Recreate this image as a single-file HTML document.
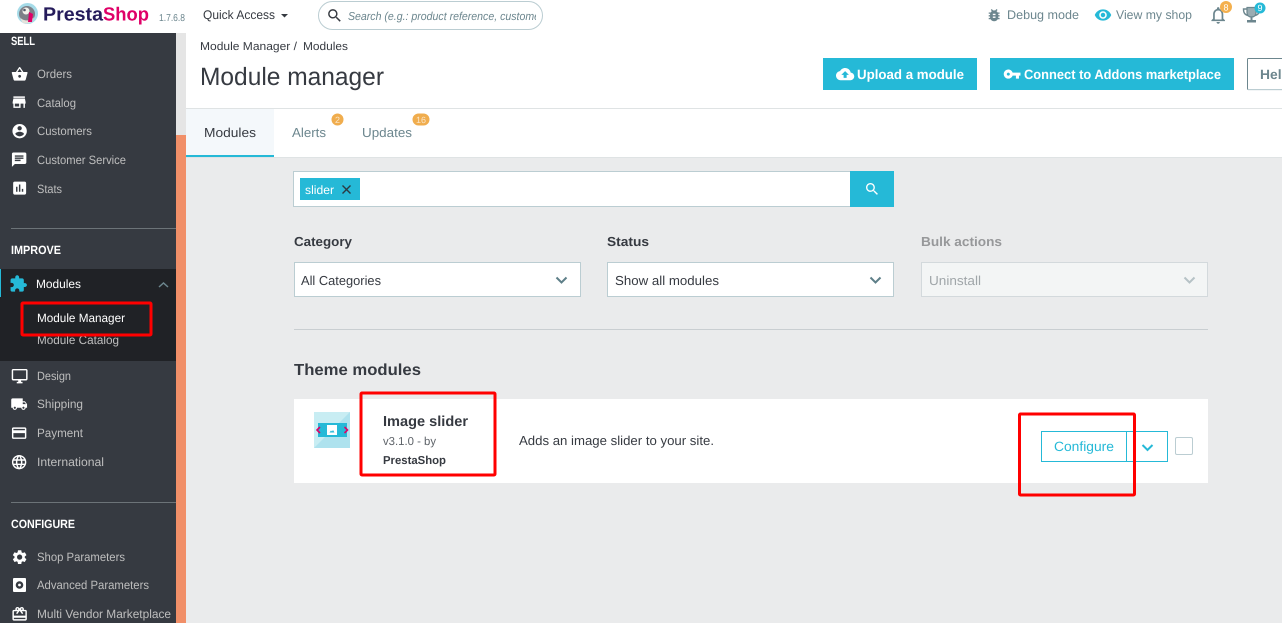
<!DOCTYPE html>
<html lang="en"><head><meta charset="utf-8"><title>Module manager</title>
<style>
html,body{margin:0;padding:0;background:#eaebec;overflow:hidden}
svg{display:block}
text{font-family:"Liberation Sans",Arial,sans-serif;text-rendering:geometricPrecision}
.s{font-size:12px;fill:#bebebe}
.g{font-size:12px;font-weight:bold;fill:#fff}
.i{fill:#fff}
</style></head><body>
<svg width="1282" height="623" viewBox="0 0 1282 623" xmlns="http://www.w3.org/2000/svg">
<rect width="1282" height="623" fill="#eaebec"/>
<!-- top bar -->
<rect width="1282" height="33" fill="#fff"/>
<circle cx="27.500" cy="13.500" r="10.500" fill="#a5dbe8"/>
<circle cx="27" cy="14" r="8" fill="#7d8088"/>
<path d="M20 17c2 4 10 5 14 0l-2 5c-4 2-8 2-10 0z" fill="#e6e3dc"/>
<circle cx="26" cy="11" r="3.500" fill="#f2f0ea"/>
<circle cx="24.500" cy="10" r="1.300" fill="#54596a"/>
<path d="M29 12l4 2-1 8h-4z" fill="#df0067"/>
<text x="43" y="20.500" font-size="19" font-weight="bold" fill="#251b5b" textLength="60" lengthAdjust="spacingAndGlyphs">Presta</text>
<text x="103" y="20.500" font-size="19" font-weight="bold" fill="#df0067" textLength="46" lengthAdjust="spacingAndGlyphs">Shop</text>
<text x="159" y="21" font-size="10" fill="#6c868e" textLength="26" lengthAdjust="spacingAndGlyphs">1.7.6.8</text>
<text x="203" y="19" font-size="12.500" fill="#363a41" textLength="72" lengthAdjust="spacingAndGlyphs">Quick Access</text>
<path d="M281 14h7l-3.500 3.500z" fill="#363a41"/>
<rect x="318.500" y="1.500" width="224" height="28" rx="14" fill="#fff" stroke="#bbcdd2"/>
<path transform="translate(326,7) scale(.72)" d="M15.500 14h-.79l-.28-.27C15.410 12.590 16 11.110 16 9.500 16 5.910 13.090 3 9.500 3S3 5.910 3 9.500 5.910 16 9.500 16c1.610 0 3.090-.59 4.230-1.570l.27.280v.79l5 4.990L20.490 19l-4.990-5zm-6 0C7.010 14 5 11.990 5 9.500S7.010 5 9.500 5 14 7.010 14 9.500 11.990 14 9.500 14z" fill="#363a41"/>
<svg x="348" y="5" width="188" height="22"><text x="0" y="15" font-size="11.500" font-style="italic" fill="#6c868e" textLength="192" lengthAdjust="spacingAndGlyphs">Search (e.g.: product reference, custome</text></svg>
<path transform="translate(986,7) scale(.68)" d="M20 8h-2.810c-.45-.78-1.070-1.450-1.820-1.960L17 4.410 15.590 3l-2.170 2.170C12.960 5.060 12.490 5 12 5c-.49 0-.96.060-1.410.170L8.410 3 7 4.410l1.620 1.630C7.880 6.550 7.260 7.220 6.810 8H4v2h2.090c-.05.330-.09.660-.09 1v1H4v2h2v1c0 .340.040.670.090 1H4v2h2.810c1.040 1.790 2.970 3 5.190 3s4.150-1.210 5.190-3H20v-2h-2.090c.050-.33.090-.66.090-1v-1h2v-2h-2v-1c0-.34-.04-.67-.09-1H20V8zm-6 8h-4v-2h4v2zm0-4h-4v-2h4v2z" fill="#6c868e"/>
<text x="1007" y="19" font-size="12.500" fill="#6c868e" textLength="72" lengthAdjust="spacingAndGlyphs">Debug mode</text>
<path transform="translate(1094,6) scale(.75)" d="M12 4.500C7 4.500 2.730 7.610 1 12c1.730 4.390 6 7.500 11 7.500s9.270-3.110 11-7.500c-1.730-4.390-6-7.500-11-7.500zM12 17c-2.760 0-5-2.240-5-5s2.240-5 5-5 5 2.240 5 5-2.240 5-5 5zm0-8c-1.660 0-3 1.340-3 3s1.340 3 3 3 3-1.340 3-3-1.340-3-3-3z" fill="#25b9d7"/>
<text x="1116" y="19" font-size="12.500" fill="#6c868e" textLength="76" lengthAdjust="spacingAndGlyphs">View my shop</text>
<path transform="translate(1208,5) scale(.85)" d="M12 22c1.100 0 2-.9 2-2h-4c0 1.100.9 2 2 2zm6-6v-5c0-3.070-1.630-5.640-4.500-6.320V4c0-.83-.67-1.500-1.500-1.500s-1.500.67-1.500 1.500v.68C7.640 5.360 6 7.920 6 11v5l-2 2v1h16v-1l-2-2zm-2 1H8v-6c0-2.480 1.510-4.500 4-4.500s4 2.020 4 4.500v6z" fill="#6c868e"/>
<circle cx="1226" cy="7" r="6" fill="#f4b04e"/>
<text x="1226" y="10.500" font-size="9" fill="#fff" text-anchor="middle">8</text>
<path d="M1247 9h-3.500c0 4 1.500 6 4.500 6.500M1256 9h3.500c0 4-1.500 6-4.500 6.500" fill="none" stroke="#6c868e" stroke-width="1.400"/>
<path d="M1247 7.500h9v5c0 3-2 4.500-4.500 4.500s-4.500-1.500-4.500-4.500z" fill="#9aacb2" stroke="#6c868e" stroke-width="1.200"/>
<rect x="1250.500" y="17" width="2" height="3" fill="#6c868e"/>
<rect x="1247" y="20" width="9" height="2.500" fill="#6c868e"/>
<circle cx="1260" cy="8" r="5.500" fill="#25b9d7"/>
<text x="1260" y="11" font-size="9" fill="#fff" text-anchor="middle">9</text>

<!-- sidebar -->
<rect x="176" y="33" width="10" height="102" fill="#e5e5e5"/>
<rect x="176" y="135" width="10" height="488" fill="#f18f68"/>
<rect y="33" width="176" height="590" fill="#363a41"/>
<rect y="269" width="176" height="92" fill="#202226"/>
<rect y="269" width="1" height="28" fill="#25b9d7"/>
<rect x="11" y="228" width="165" height="1" fill="#6c7378"/>
<rect x="11" y="502" width="165" height="1" fill="#6c7378"/>
<text class="g" x="11" y="45" textLength="24" lengthAdjust="spacingAndGlyphs">SELL</text>
<text class="g" x="11" y="254" textLength="50" lengthAdjust="spacingAndGlyphs">IMPROVE</text>
<text class="g" x="11" y="528" textLength="64" lengthAdjust="spacingAndGlyphs">CONFIGURE</text>
<text class="s" x="37" y="78" textLength="35" lengthAdjust="spacingAndGlyphs">Orders</text>
<text class="s" x="37" y="107" textLength="39" lengthAdjust="spacingAndGlyphs">Catalog</text>
<text class="s" x="37" y="135" textLength="55" lengthAdjust="spacingAndGlyphs">Customers</text>
<text class="s" x="37" y="164" textLength="89" lengthAdjust="spacingAndGlyphs">Customer Service</text>
<text class="s" x="37" y="193" textLength="25" lengthAdjust="spacingAndGlyphs">Stats</text>
<text class="s" x="36" y="288" textLength="45" lengthAdjust="spacingAndGlyphs" style="fill:#fff">Modules</text>
<text class="s" x="37" y="322" textLength="88" lengthAdjust="spacingAndGlyphs" style="fill:#fff">Module Manager</text>
<text class="s" x="37" y="344" textLength="82" lengthAdjust="spacingAndGlyphs">Module Catalog</text>
<text class="s" x="37" y="380" textLength="34" lengthAdjust="spacingAndGlyphs">Design</text>
<text class="s" x="37" y="408" textLength="46" lengthAdjust="spacingAndGlyphs">Shipping</text>
<text class="s" x="37" y="437" textLength="46" lengthAdjust="spacingAndGlyphs">Payment</text>
<text class="s" x="37" y="466" textLength="67" lengthAdjust="spacingAndGlyphs">International</text>
<text class="s" x="37" y="561" textLength="88" lengthAdjust="spacingAndGlyphs">Shop Parameters</text>
<text class="s" x="37" y="589" textLength="112" lengthAdjust="spacingAndGlyphs">Advanced Parameters</text>
<text class="s" x="37" y="618" textLength="134" lengthAdjust="spacingAndGlyphs">Multi Vendor Marketplace</text>
<path class="i" transform="translate(11,65.500) scale(.72)" d="M17.210 9l-4.380-6.560c-.19-.28-.51-.42-.83-.42-.32 0-.64.140-.83.430L6.790 9H2c-.55 0-1 .45-1 1 0 .090.010.180.040.270l2.540 9.270c.23.840 1 1.460 1.920 1.460h13c.92 0 1.690-.62 1.930-1.460l2.540-9.270L23 10c0-.55-.45-1-1-1h-4.790zM9 9l3-4.400L15 9H9zm3 8c-1.100 0-2-.9-2-2s.9-2 2-2 2 .9 2 2-.9 2-2 2z"/>
<path class="i" transform="translate(10.500,93.500) scale(.72)" d="M20 4H4v2h16V4zm1 10v-2l-1-5H4l-1 5v2h1v6h10v-6h4v6h2v-6h1zm-9 4H6v-4h6v4z"/>
<path class="i" transform="translate(11,122.500) scale(.72)" d="M12 2C6.480 2 2 6.480 2 12s4.480 10 10 10 10-4.480 10-10S17.520 2 12 2zm0 3c1.660 0 3 1.340 3 3s-1.340 3-3 3-3-1.340-3-3 1.340-3 3-3zm0 14.200c-2.500 0-4.710-1.280-6-3.220.03-1.990 4-3.080 6-3.080 1.990 0 5.970 1.090 6 3.080-1.290 1.940-3.500 3.220-6 3.220z"/>
<path class="i" transform="translate(10.500,151) scale(.72)" d="M20 2H4c-1.100 0-1.990.9-1.990 2L2 22l4-4h14c1.100 0 2-.9 2-2V4c0-1.100-.9-2-2-2zM6 9h12v2H6V9zm8 5H6v-2h8v2zm4-6H6V6h12v2z"/>
<path class="i" transform="translate(11,179.500) scale(.72)" d="M19 3H5c-1.100 0-2 .9-2 2v14c0 1.100.9 2 2 2h14c1.100 0 2-.9 2-2V5c0-1.100-.9-2-2-2zM9 17H7v-7h2v7zm4 0h-2V7h2v10zm4 0h-2v-4h2v4z"/>
<path fill="#25b9d7" transform="translate(9,274.500) scale(.78)" d="M20.500 11H19V7c0-1.100-.9-2-2-2h-4V3.500C13 2.120 11.880 1 10.500 1S8 2.120 8 3.500V5H4c-1.100 0-1.990.9-1.990 2v3.800H3.500c1.490 0 2.700 1.210 2.700 2.700s-1.210 2.700-2.700 2.700H2V20c0 1.100.9 2 2 2h3.800v-1.500c0-1.490 1.210-2.700 2.700-2.700 1.490 0 2.700 1.210 2.700 2.700V22H17c1.100 0 2-.9 2-2v-4h1.500c1.380 0 2.500-1.120 2.500-2.500S21.880 11 20.500 11z"/>
<path d="M159 287l4.500-4 4.500 4" fill="none" stroke="#6c868e" stroke-width="1.500"/>
<path class="i" transform="translate(11,367.500) scale(.72)" d="M21 2H3c-1.100 0-2 .9-2 2v12c0 1.100.9 2 2 2h7v2H8v2h8v-2h-2v-2h7c1.100 0 2-.9 2-2V4c0-1.100-.9-2-2-2zm0 14H3V4h18v12z"/>
<path class="i" transform="translate(10.500,395.500) scale(.72)" d="M20 8h-3V4H3c-1.100 0-2 .9-2 2v11h2c0 1.660 1.340 3 3 3s3-1.340 3-3h6c0 1.660 1.340 3 3 3s3-1.340 3-3h2v-5l-3-4zM6 18.500c-.83 0-1.500-.67-1.500-1.500s.67-1.500 1.500-1.500 1.500.67 1.500 1.500-.67 1.500-1.500 1.500zm13.500-9l1.960 2.500H17V9.500h2.500zm-1.500 9c-.83 0-1.500-.67-1.500-1.500s.67-1.500 1.500-1.500 1.500.67 1.500 1.500-.67 1.500-1.500 1.500z"/>
<path class="i" transform="translate(10.500,424.500) scale(.72)" d="M20 4H4c-1.110 0-1.990.89-1.990 2L2 18c0 1.110.89 2 2 2h16c1.110 0 2-.89 2-2V6c0-1.110-.89-2-2-2zm0 14H4v-6h16v6zm0-10H4V6h16v2z"/>
<path class="i" transform="translate(10.500,453.500) scale(.72)" d="M11.990 2C6.470 2 2 6.480 2 12s4.470 10 9.990 10C17.520 22 22 17.520 22 12S17.520 2 11.990 2zm6.930 6h-2.950c-.32-1.250-.78-2.450-1.380-3.560 1.840.63 3.370 1.910 4.330 3.560zM12 4.040c.83 1.200 1.480 2.530 1.910 3.960h-3.820c.43-1.430 1.080-2.760 1.910-3.960zM4.260 14C4.100 13.360 4 12.690 4 12s.1-1.360.26-2h3.380c-.08.660-.14 1.320-.14 2 0 .680.060 1.340.14 2H4.260zm.82 2h2.950c.32 1.250.78 2.450 1.380 3.560-1.840-.63-3.370-1.900-4.330-3.560zm2.950-8H5.080c.96-1.660 2.490-2.930 4.330-3.560C8.810 5.550 8.350 6.750 8.030 8zM12 19.960c-.83-1.200-1.480-2.530-1.910-3.960h3.820c-.43 1.430-1.080 2.760-1.910 3.960zM14.340 14H9.660c-.09-.66-.16-1.320-.16-2 0-.68.070-1.350.16-2h4.680c.09.650.16 1.320.16 2 0 .680-.07 1.340-.16 2zm.25 5.560c.6-1.110 1.060-2.310 1.380-3.560h2.950c-.96 1.650-2.490 2.930-4.330 3.560zM16.360 14c.08-.66.14-1.320.14-2 0-.68-.06-1.340-.14-2h3.380c.16.640.26 1.310.26 2s-.1 1.360-.26 2h-3.380z"/>
<path class="i" transform="translate(11,548.500) scale(.72)" d="M19.140 12.940c.04-.3.060-.61.060-.94 0-.32-.02-.64-.07-.94l2.030-1.580c.18-.14.23-.41.120-.61l-1.920-3.320c-.12-.22-.37-.29-.59-.22l-2.390.96c-.5-.38-1.030-.7-1.620-.94l-.36-2.540c-.04-.24-.24-.41-.48-.41h-3.840c-.24 0-.43.170-.47.410l-.36 2.540c-.59.240-1.130.570-1.620.940l-2.390-.96c-.22-.08-.47 0-.59.220L2.740 8.870c-.12.210-.08.470.120.610l2.030 1.580c-.05.3-.09.630-.09.940s.02.640.070.940l-2.030 1.580c-.18.140-.23.410-.12.610l1.920 3.320c.12.220.37.290.59.220l2.390-.96c.5.380 1.030.7 1.620.94l.36 2.540c.05.240.24.410.48.41h3.840c.24 0 .44-.17.47-.41l.36-2.540c.59-.24 1.130-.56 1.620-.94l2.390.96c.22.080.47 0 .59-.22l1.920-3.320c.12-.22.070-.47-.12-.61l-2.010-1.580zM12 15.600c-1.980 0-3.600-1.620-3.600-3.600s1.620-3.600 3.600-3.600 3.600 1.620 3.600 3.600-1.620 3.600-3.600 3.600z"/>
<rect x="13" y="578" width="13" height="14" rx="1" fill="#fff"/>
<circle cx="19.500" cy="585" r="3.800" fill="#363a41"/><circle cx="19.500" cy="585" r="1.400" fill="#fff"/>
<path class="i" transform="translate(11,605.500) scale(.72)" d="M20 6h-2.180c.11-.31.180-.65.180-1 0-1.660-1.340-3-3-3-1.050 0-1.960.54-2.500 1.350l-.5.670-.5-.68C10.960 2.540 10.050 2 9 2 7.340 2 6 3.340 6 5c0 .35.070.69.180 1H4c-1.110 0-1.990.89-1.990 2L2 19c0 1.110.89 2 2 2h16c1.110 0 2-.89 2-2V8c0-1.110-.89-2-2-2zm-5-2c.55 0 1 .45 1 1s-.45 1-1 1-1-.45-1-1 .45-1 1-1zM9 4c.55 0 1 .45 1 1s-.45 1-1 1-1-.45-1-1 .45-1 1-1zm11 15H4v-2h16v2zm0-5H4V8h5.080L7 10.830 8.620 12 11 8.760l1-1.360 1 1.360L15.380 12 17 10.830 14.920 8H20v6z"/>
<rect x="22" y="303" width="129" height="32" fill="none" stroke="#f00" stroke-width="3" rx="1"/>

<!-- header -->
<rect x="186" y="33" width="1096" height="75" fill="#fff"/>
<rect x="186" y="108" width="1096" height="1" fill="#dfe3e4"/>
<text x="200" y="50" font-size="11.500" fill="#363a41" textLength="97" lengthAdjust="spacingAndGlyphs">Module Manager /</text>
<text x="303" y="50" font-size="11.500" fill="#363a41" textLength="45" lengthAdjust="spacingAndGlyphs">Modules</text>
<text x="200" y="85" font-size="25" fill="#363a41" textLength="184" lengthAdjust="spacingAndGlyphs">Module manager</text>
<rect x="823" y="58" width="154" height="32" fill="#25b9d7"/>
<path class="i" transform="translate(836,65) scale(.76)" d="M19.350 10.040C18.670 6.590 15.640 4 12 4 9.110 4 6.600 5.640 5.350 8.040 2.340 8.360 0 10.910 0 14c0 3.310 2.690 6 6 6h13c2.760 0 5-2.240 5-5 0-2.640-2.050-4.780-4.650-4.960zM14 13v4h-4v-4H7l5-5 5 5h-3z"/>
<text x="857" y="79" font-size="13.500" font-weight="bold" fill="#fff" textLength="107" lengthAdjust="spacingAndGlyphs">Upload a module</text>
<rect x="990" y="58" width="244" height="32" fill="#25b9d7"/>
<path class="i" transform="translate(1003,65) scale(.76)" d="M12.650 10C11.830 7.670 9.610 6 7 6c-3.310 0-6 2.690-6 6s2.690 6 6 6c2.610 0 4.830-1.670 5.650-4H17v4h4v-4h2v-4H12.650zM7 14c-1.100 0-2-.9-2-2s.9-2 2-2 2 .9 2 2-.9 2-2 2z"/>
<text x="1024" y="79" font-size="13.500" font-weight="bold" fill="#fff" textLength="197" lengthAdjust="spacingAndGlyphs">Connect to Addons marketplace</text>
<rect x="1247.500" y="58.500" width="50" height="31" rx="1" fill="#fff" stroke="#6c868e"/>
<rect x="1248" y="89" width="50" height="1.200" fill="#bbcdd2"/>
<text x="1260" y="79" font-size="13.500" font-weight="bold" fill="#6c868e" textLength="30" lengthAdjust="spacingAndGlyphs">Help</text>

<!-- tabs -->
<rect x="186" y="109" width="1096" height="48" fill="#fff"/>
<rect x="186" y="157" width="1096" height="1" fill="#dfe3e4"/>
<rect x="186" y="109" width="88" height="46" fill="#f4f8fb"/>
<rect x="186" y="155" width="88" height="2" fill="#25b9d7"/>
<text x="204" y="137" font-size="13" fill="#363a41" textLength="52" lengthAdjust="spacingAndGlyphs">Modules</text>
<text x="292" y="137" font-size="13" fill="#6c868e" textLength="34" lengthAdjust="spacingAndGlyphs">Alerts</text>
<text x="362" y="137" font-size="13" fill="#6c868e" textLength="50" lengthAdjust="spacingAndGlyphs">Updates</text>
<circle cx="337.500" cy="119.500" r="6" fill="#f0ad4e"/>
<text x="337.500" y="123" font-size="9" fill="#fbe6c8" text-anchor="middle">2</text>
<rect x="412.500" y="113.500" width="17" height="12" rx="6" fill="#f0ad4e"/>
<text x="421" y="123" font-size="9" fill="#fbe6c8" text-anchor="middle">16</text>

<!-- search -->
<rect x="293.500" y="171.500" width="557" height="35" fill="#fff" stroke="#bbcdd2"/>
<rect x="850" y="171" width="44" height="36" fill="#25b9d7"/>
<path class="i" transform="translate(864,181) scale(.68)" d="M15.500 14h-.79l-.28-.27C15.410 12.590 16 11.110 16 9.500 16 5.910 13.090 3 9.500 3S3 5.910 3 9.500 5.910 16 9.500 16c1.610 0 3.090-.59 4.230-1.570l.27.280v.79l5 4.990L20.490 19l-4.990-5zm-6 0C7.010 14 5 11.990 5 9.500S7.010 5 9.500 5 14 7.010 14 9.500 11.990 14 9.500 14z"/>
<rect x="300" y="178" width="60" height="22" fill="#25b9d7"/>
<text x="305" y="194" font-size="12" fill="#fff" textLength="29" lengthAdjust="spacingAndGlyphs">slider</text>
<path d="M342.500 185.500l8 8M350.500 185.500l-8 8" stroke="#2b3a42" stroke-width="1.400" fill="none"/>

<!-- filters -->
<text x="294" y="246" font-size="13" font-weight="bold" fill="#363a41" textLength="58" lengthAdjust="spacingAndGlyphs">Category</text>
<text x="607" y="246" font-size="13" font-weight="bold" fill="#363a41" textLength="42" lengthAdjust="spacingAndGlyphs">Status</text>
<text x="921" y="246" font-size="13" font-weight="bold" fill="#97989a" textLength="81" lengthAdjust="spacingAndGlyphs">Bulk actions</text>
<rect x="294.500" y="262.500" width="286" height="34" fill="#fff" stroke="#bbcdd2"/>
<rect x="607.500" y="262.500" width="286" height="34" fill="#fff" stroke="#bbcdd2"/>
<rect x="921.500" y="262.500" width="286" height="34" fill="#f3f5f5" stroke="#d3d9dc"/>
<text x="301" y="285" font-size="13" fill="#363a41" textLength="80" lengthAdjust="spacingAndGlyphs">All Categories</text>
<text x="615" y="285" font-size="13" fill="#363a41" textLength="104" lengthAdjust="spacingAndGlyphs">Show all modules</text>
<text x="929" y="285" font-size="13" fill="#a0a6a9" textLength="52" lengthAdjust="spacingAndGlyphs">Uninstall</text>
<path d="M556.500 277.500l5 5 5-5" fill="none" stroke="#5e7f88" stroke-width="2"/>
<path d="M870.500 277.500l5 5 5-5" fill="none" stroke="#5e7f88" stroke-width="2"/>
<path d="M1184.500 277.500l5 5 5-5" fill="none" stroke="#b6c2c6" stroke-width="2"/>
<rect x="294" y="329" width="914" height="1" fill="#c9ced1"/>
<text x="294" y="375" font-size="16" font-weight="bold" fill="#363a41" textLength="127" lengthAdjust="spacingAndGlyphs">Theme modules</text>

<!-- card -->
<rect x="294" y="399" width="914" height="84" fill="#fff"/>
<rect x="314" y="412" width="36" height="36" fill="#c8edf3"/>
<path d="M350 412v36h-36z" fill="#aee2ee"/>
<rect x="318" y="423" width="29" height="14" fill="#25b9d7"/>
<rect x="327" y="425" width="10" height="10" fill="#fff"/>
<path d="M329.500 432.500l1.500-2 1 1 1-1.500 1.500 2.500z" fill="#25b9d7"/>
<path d="M320 427l-3 3 3 3M344.500 427l3 3-3 3" fill="none" stroke="#df0067" stroke-width="1.600"/>
<text x="383" y="426" font-size="14.500" font-weight="bold" fill="#363a41" textLength="85" lengthAdjust="spacingAndGlyphs">Image slider</text>
<text x="383" y="445" font-size="11.500" fill="#5e6369" textLength="53" lengthAdjust="spacingAndGlyphs">v3.1.0 - by</text>
<text x="383" y="464" font-size="11.500" font-weight="bold" fill="#363a41" textLength="63" lengthAdjust="spacingAndGlyphs">PrestaShop</text>
<text x="519" y="445" font-size="13" fill="#363a41" textLength="195" lengthAdjust="spacingAndGlyphs">Adds an image slider to your site.</text>
<rect x="1041.500" y="431.500" width="85" height="30" fill="#fff" stroke="#25b9d7"/>
<rect x="1126.500" y="431.500" width="41" height="30" fill="#fff" stroke="#25b9d7"/>
<text x="1054" y="451" font-size="13.500" fill="#25b9d7" textLength="60" lengthAdjust="spacingAndGlyphs">Configure</text>
<path d="M1142.500 445l5 5 5-5" fill="none" stroke="#25b9d7" stroke-width="2"/>
<rect x="1175.500" y="437.500" width="17" height="17" rx="1.500" fill="#fff" stroke="#bbcdd2"/>
<rect x="361" y="393" width="134" height="82" fill="none" stroke="#f00" stroke-width="3" rx="1"/>
<rect x="1019.500" y="414" width="115" height="81" fill="none" stroke="#f00" stroke-width="3" rx="1"/>
</svg>
</body></html>
